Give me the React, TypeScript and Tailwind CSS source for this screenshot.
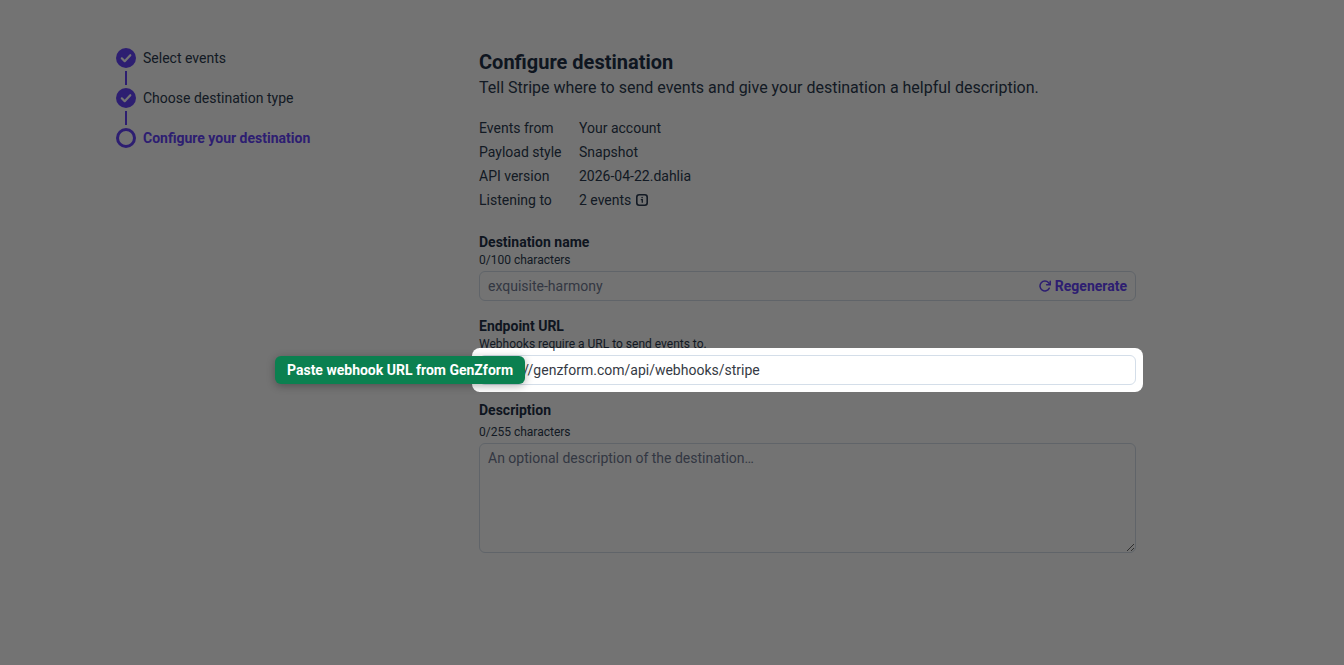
import React, { useState } from "react";
import clsx from "clsx";

type StepStatus = "done" | "current";

const steps: { label: string; status: StepStatus }[] = [
  { label: "Select events", status: "done" },
  { label: "Choose destination type", status: "done" },
  { label: "Configure your destination", status: "current" },
];

const InfoIcon = () => (
  <svg width="12" height="12" viewBox="0 0 12 12" fill="none" aria-hidden="true">
    <rect x="0.8" y="0.8" width="10.4" height="10.4" rx="2.4" stroke="currentColor" strokeWidth="1.6" />
    <path d="M4.8 5.6h1.5v3.2" stroke="currentColor" strokeWidth="1.3" />
    <circle cx="6.1" cy="3.6" r="0.8" fill="currentColor" />
  </svg>
);

const RefreshIcon = () => (
  <svg width="12" height="12" viewBox="0 0 12 12" fill="none" stroke="currentColor" strokeWidth="1.5" strokeLinecap="round" strokeLinejoin="round" aria-hidden="true">
    <path d="M10.3 8.2A4.9 4.9 0 1 1 9.6 2.8L11 4.6" />
    <path d="M11.2 1.2v3.6H7.6" />
  </svg>
);

const StepMarker = ({ status }: { status: StepStatus }) => (
  <svg width="20" height="20" viewBox="0 0 20 20" fill="none" className="text-[#6444fb]" aria-hidden="true">
    {status === "done" ? (
      <>
        <circle cx="10" cy="10" r="10" fill="currentColor" />
        <path d="M5.8 10.3l2.9 2.9 5.6-6" stroke="#fff" strokeWidth="2.2" strokeLinecap="round" strokeLinejoin="round" />
      </>
    ) : (
      <circle cx="10" cy="10" r="8.5" stroke="currentColor" strokeWidth="3" />
    )}
  </svg>
);

const Steps = () => (
  <ol className="flex w-[363px] shrink-0 flex-col">
    {steps.map((step, index) => (
      <li key={step.label}>
        {index > 0 && <div className="my-[3px] ml-[9px] h-3.5 w-0.5 bg-[#6444fb]" />}
        <div
          className={clsx(
            "flex h-5 items-center gap-[7px]",
            step.status === "current" && "font-bold text-[#6444fb]"
          )}
          aria-current={step.status === "current" ? "step" : undefined}
        >
          <StepMarker status={step.status} />
          {step.label}
        </div>
      </li>
    ))}
  </ol>
);

const SummaryRow = ({ label, children }: { label: string; children: React.ReactNode }) => (
  <div className="flex h-6 items-center">
    <dt className="w-[100px]">{label}</dt>
    <dd className="flex items-center gap-[5px]">{children}</dd>
  </div>
);

const App = () => {
  const [name, setName] = useState("");
  const [url, setUrl] = useState("https://genzform.com/api/webhooks/stripe");
  const [description, setDescription] = useState("");

  return (
    <div className="flex min-h-screen overflow-hidden bg-white pt-12 pr-10 pl-[116px] font-['Roboto',sans-serif] text-sm text-[#2b3b50]">
      <Steps />

      <main className="w-full max-w-[657px]">
        <h1 className="text-xl leading-7 font-bold text-[#1f3147]">Configure destination</h1>
        <p className="text-base leading-6">
          Tell Stripe where to send events and give your destination a helpful description.
        </p>

        <dl className="mt-4">
          <SummaryRow label="Events from">Your account</SummaryRow>
          <SummaryRow label="Payload style">Snapshot</SummaryRow>
          <SummaryRow label="API version">2026-04-22.dahlia</SummaryRow>
          <SummaryRow label="Listening to">
            2 events <InfoIcon />
          </SummaryRow>
        </dl>

        <form className="mt-5" onSubmit={(e) => e.preventDefault()}>
          <label htmlFor="name" className="block font-bold text-[#1f3147]">Destination name</label>
          <p className="text-xs">{name.length}/100 characters</p>
          <div className="mt-[3px] flex h-[30px] items-center rounded-md border border-[#d4dee9] px-2">
            <input
              id="name"
              maxLength={100}
              value={name}
              onChange={(e) => setName(e.target.value)}
              placeholder="exquisite-harmony"
              className="min-w-0 flex-1 outline-none placeholder:text-[#717b93]"
            />
            <button type="button" className="flex items-center gap-1 font-bold text-[#6444fb]">
              <RefreshIcon />
              Regenerate
            </button>
          </div>

          <label htmlFor="url" className="mt-[15px] block font-bold text-[#1f3147]">Endpoint URL</label>
          <p className="text-xs">Webhooks require a URL to send events to.</p>
          <div className="relative mt-[3px]">
            <input
              id="url"
              value={url}
              onChange={(e) => setUrl(e.target.value)}
              className="block h-[30px] w-full rounded-md border border-[#d4dee9] px-2 text-[#353a44] outline-none"
            />
            {/* Spotlight: the spread shadow dims everything outside the field */}
            <div className="pointer-events-none absolute -inset-[7px] z-10 rounded-lg shadow-[0_0_0_2000px_rgba(0,0,0,0.55)]" />
            <div
              role="tooltip"
              className="absolute top-px -left-[204px] z-20 rounded-md bg-[#0b8050] px-3 py-1 font-bold whitespace-nowrap text-white shadow-[0_2px_8px_rgba(0,0,0,0.3)]"
            >
              Paste webhook URL from GenZform
            </div>
          </div>

          <label htmlFor="description" className="mt-[15px] block font-bold text-[#1f3147]">Description</label>
          <p className="mt-1 text-xs">{description.length}/255 characters</p>
          <textarea
            id="description"
            maxLength={255}
            value={description}
            onChange={(e) => setDescription(e.target.value)}
            placeholder="An optional description of the destination…"
            className="mt-[3px] block h-[110px] w-full resize-y rounded-md border border-[#d4dee9] px-2 py-1 outline-none placeholder:text-[#717b93]"
          />
        </form>
      </main>
    </div>
  );
};

export default App;
